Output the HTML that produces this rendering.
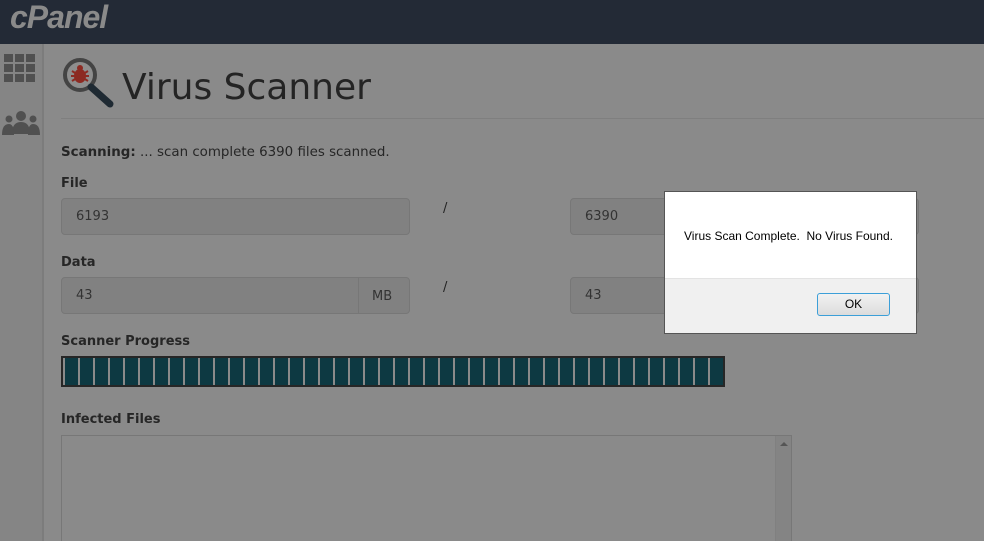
<!DOCTYPE html>
<html><head><style>
*{box-sizing:border-box;margin:0;padding:0}
html,body{width:984px;height:541px;overflow:hidden}
body{background:#8a8a8a;font-family:"Liberation Sans",sans-serif;position:relative}
.hdr{position:absolute;left:0;top:0;width:984px;height:44px;background:#232a36}
.logo{position:absolute;left:10px;top:-1px;font:italic bold 32px "Liberation Sans",sans-serif;color:#8a8a8a;letter-spacing:-1px}
.side{position:absolute;left:0;top:44px;width:44px;height:497px;background:#858585;border-right:2px solid #7c7c7c}
.abs{position:absolute}
.lbl{position:absolute;font:bold 13px "DejaVu Sans",sans-serif;color:#262626}
.inp{position:absolute;border:1px solid #777;border-radius:4px;background:#818181;font:13px "DejaVu Sans",sans-serif;color:#333;padding:10px 0 0 14px;height:37px}
.slash{position:absolute;font:13px "DejaVu Sans",sans-serif;color:#222}
.prog{position:absolute;left:61px;top:356px;width:664px;height:31px;border:2px solid #262626;background:repeating-linear-gradient(90deg,#8a8a8a 0 2px,#0d3942 2px 15px)}
</style></head><body>
<div class="hdr"><div class="logo">cPanel</div></div>
<div class="side">
<svg class="abs" style="left:4px;top:10px" width="32" height="30"><g fill="#505050">
<rect x="0" y="0" width="9" height="8"/><rect x="11" y="0" width="9" height="8"/><rect x="22" y="0" width="9" height="8"/>
<rect x="0" y="10" width="9" height="8"/><rect x="11" y="10" width="9" height="8"/><rect x="22" y="10" width="9" height="8"/>
<rect x="0" y="20" width="9" height="8"/><rect x="11" y="20" width="9" height="8"/><rect x="22" y="20" width="9" height="8"/></g></svg>
<svg class="abs" style="left:1px;top:66px" width="40" height="26"><g fill="#505050">
<circle cx="20" cy="6" r="5"/><circle cx="8" cy="9" r="3.5"/><circle cx="32" cy="9" r="3.5"/>
<path d="M11 24 Q11 12 20 12 Q29 12 29 24Z"/><path d="M1 25 Q1 14 8 14 Q13 14 13 25Z"/><path d="M27 25 Q27 14 32 14 Q39 14 39 25Z"/></g></svg>
</div>
<svg class="abs" style="left:60px;top:57px" width="56" height="52">
<circle cx="20" cy="18" r="15" fill="#8e8e8e" stroke="#444" stroke-width="4"/>
<ellipse cx="20" cy="19" rx="6" ry="7" fill="#8c2a22"/><circle cx="20" cy="11" r="3" fill="#8c2a22"/>
<path d="M12 14 L28 24 M12 24 L28 14 M11 19 L29 19" stroke="#8c2a22" stroke-width="2"/>
<path d="M31 30 L50 47" stroke="#1f2a33" stroke-width="7" stroke-linecap="round"/>
</svg>
<div class="abs" style="left:122px;top:67px;font:36px 'DejaVu Sans',sans-serif;color:#242424">Virus Scanner</div>
<div class="abs" style="left:61px;top:118px;width:923px;height:1px;background:#7f7f7f"></div>
<div class="abs" style="left:61px;top:145px;font:13.4px 'DejaVu Sans',sans-serif;color:#262626"><b>Scanning:</b> ... scan complete 6390 files scanned.</div>
<div class="lbl" style="left:61px;top:176px">File</div>
<div class="inp" style="left:61px;top:198px;width:349px">6193</div>
<div class="slash" style="left:443px;top:201px">/</div>
<div class="inp" style="left:570px;top:198px;width:349px">6390</div>
<div class="lbl" style="left:61px;top:255px">Data</div>
<div class="inp" style="left:61px;top:277px;width:349px;">43</div>
<div class="abs" style="left:358px;top:278px;width:51px;height:35px;border-left:1px solid #777;font:13px 'DejaVu Sans',sans-serif;color:#333;padding:11px 0 0 13px">MB</div>
<div class="slash" style="left:443px;top:280px">/</div>
<div class="inp" style="left:570px;top:277px;width:349px">43</div>
<div class="lbl" style="left:61px;top:334px">Scanner Progress</div>
<div class="prog"></div>
<div class="lbl" style="left:61px;top:412px">Infected Files</div>
<div class="abs" style="left:61px;top:435px;width:731px;height:110px;border:1px solid #777;background:#8a8a8a"></div>
<div class="abs" style="left:775px;top:436px;width:16px;height:110px;background:#848484;border-left:1px solid #808080"></div>
<div class="abs" style="left:780px;top:442px;width:0;height:0;border-left:4px solid transparent;border-right:4px solid transparent;border-bottom:4px solid #555"></div>
<div class="abs" style="left:664px;top:191px;width:253px;height:143px;background:#f0f0f0;border:1px solid #555">
<div style="height:87px;background:#fff;border-bottom:1px solid #e3e3e3;font:12px 'Liberation Sans',sans-serif;color:#000;padding:37px 0 0 19px;white-space:pre">Virus Scan Complete.  No Virus Found.</div>
<div class="abs" style="left:152px;top:101px;width:73px;height:23px;border:1px solid #3c9fd8;border-radius:3px;background:linear-gradient(#f2f2f2,#dcdcdc);font:12px 'Liberation Sans',sans-serif;text-align:center;line-height:21px">OK</div>
</div>
</body></html>
